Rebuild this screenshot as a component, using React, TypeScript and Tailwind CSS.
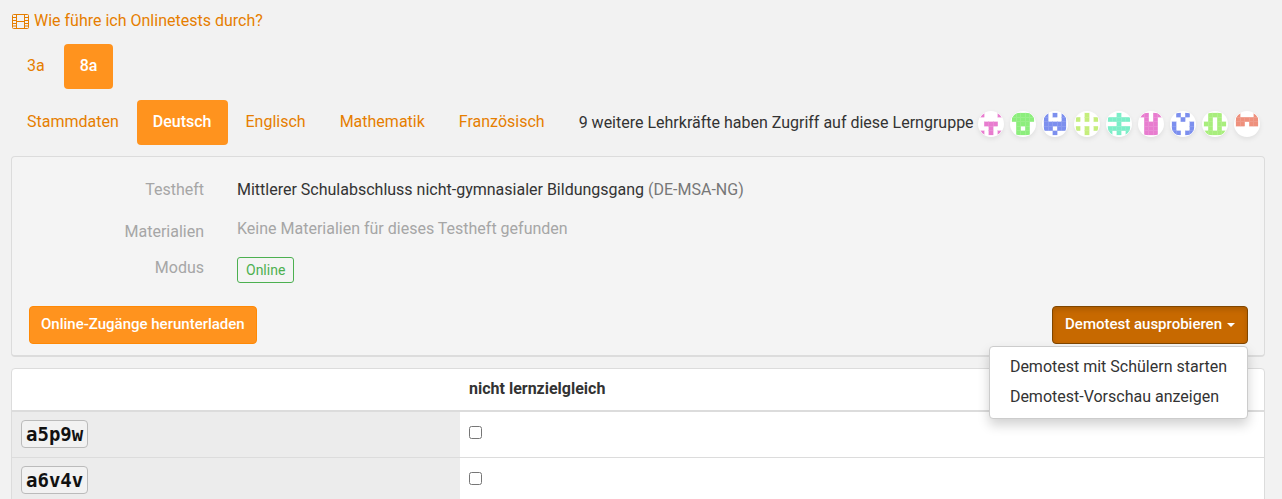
import { useState } from 'react'

type AvatarType = {
  id: number
  color: string
  rows: string[]
}

const avatars: AvatarType[] = [
  { id: 1, color: '#e87ccf', rows: ['10001', '00000', '01110', '00100', '10101'] },
  { id: 2, color: '#8cee7c', rows: ['11111', '11111', '01110', '01010', '01110'] },
  { id: 3, color: '#7c8fee', rows: ['10101', '10001', '11111', '11011', '00100'] },
  { id: 4, color: '#c5ee7c', rows: ['00100', '10101', '00000', '10101', '00100'] },
  { id: 5, color: '#7ceec8', rows: ['00100', '11111', '00100', '11111', '10101'] },
  { id: 6, color: '#e87ccf', rows: ['11011', '01010', '01110', '01110', '01110'] },
  { id: 7, color: '#7c8fee', rows: ['01010', '00100', '10001', '10001', '11011'] },
  { id: 8, color: '#a8ee7c', rows: ['01110', '01010', '11011', '01010', '11111'] },
  { id: 9, color: '#ee907c', rows: ['10001', '11111', '11011', '00000', '00000'] },
]

const classes = ['3a', '8a']
const subjects = ['Stammdaten', 'Deutsch', 'Englisch', 'Mathematik', 'Französisch']
const students = ['a5p9w', 'a6v4v']

const Avatar = ({ avatar }: { avatar: AvatarType }) => (
  <svg
    viewBox="0 0 26 26"
    className="size-[26px] shrink-0 rounded-full bg-white shadow-[0_2px_5px_rgba(0,0,0,0.08)]"
    aria-hidden="true">
    <clipPath id={`avatar-${avatar.id}`}>
      <rect x="1.75" y="1.75" width="22.5" height="22.5" rx="8" />
    </clipPath>
    <g
      clipPath={`url(#avatar-${avatar.id})`}
      fill={avatar.color}
      stroke={avatar.color}
      strokeOpacity="0.5"
      strokeWidth="0.3">
      {avatar.rows.map((row, y) =>
        row
          .split('')
          .map((cell, x) =>
            cell === '1' ? (
              <rect key={`${x}-${y}`} x={1.75 + x * 4.5} y={1.75 + y * 4.5} width="4.5" height="4.5" />
            ) : null,
          ),
      )}
    </g>
  </svg>
)

const FilmIcon = () => (
  <svg viewBox="0 0 17 15" className="h-[15px] w-[17px]" fill="none" stroke="currentColor" aria-hidden="true">
    <rect x="0.5" y="0.5" width="16" height="14" rx="1" />
    <path d="M4.5 1v13M12.5 1v13M4.5 7.5h8M1 3.5h3M1 6.5h3M1 9.5h3M1 12h3M13 3.5h3M13 6.5h3M13 9.5h3M13 12h3" />
  </svg>
)

const App: React.FC = () => {
  const [activeClass, setActiveClass] = useState('8a')
  const [activeSubject, setActiveSubject] = useState('Deutsch')
  const [menuOpen, setMenuOpen] = useState(true)

  return (
    <div className="min-h-screen overflow-hidden bg-[#f2f2f2] pl-[11px] pr-[17px] pt-[9px] font-['Roboto',sans-serif] text-[16px] leading-6 text-[#333]">
      <a href="#hilfe" className="flex w-fit items-center gap-[5px] pl-px text-[#e67e00]">
        <FilmIcon />
        Wie führe ich Onlinetests durch?
      </a>

      {/* Klassen */}
      <nav className="mt-[11px] flex gap-[3px]">
        {classes.map((name) => (
          <button
            key={name}
            type="button"
            onClick={() => setActiveClass(name)}
            className={`h-[45px] rounded px-4 pb-px ${name === activeClass ? 'bg-[#ff931e] font-medium text-white' : 'text-[#e67e00]'}`}>
            {name}
          </button>
        ))}
      </nav>

      {/* Fächer */}
      <div className="mt-[11px] flex items-center">
        <nav className="flex gap-[2px]">
          {subjects.map((name) => (
            <button
              key={name}
              type="button"
              onClick={() => setActiveSubject(name)}
              className={`h-[45px] rounded px-4 pb-px ${name === activeSubject ? 'bg-[#ff931e] font-medium text-white' : 'text-[#e67e00]'}`}>
              {name}
            </button>
          ))}
        </nav>
        <p className="ml-[18px] whitespace-nowrap">9 weitere Lehrkräfte haben Zugriff auf diese Lerngruppe</p>
        <div className="ml-1 flex items-center gap-[6px] pt-[2px]">
          {avatars.map((avatar) => (
            <Avatar key={avatar.id} avatar={avatar} />
          ))}
        </div>
      </div>

      <section className="mt-[11px] rounded border border-b-2 border-[#dcdcdc] bg-[#f4f4f4] pb-[11px] pl-[17px] pr-4 pt-[21px]">
        <dl className="grid grid-cols-[175px_1fr] gap-x-[33px]">
          <dt className="h-[42px] text-right text-[#a6a6a6]">Testheft</dt>
          <dd>
            Mittlerer Schulabschluss nicht-gymnasialer Bildungsgang <span className="text-[#777]">(DE-MSA-NG)</span>
          </dd>
          <dt className="h-9 text-right text-[#a6a6a6]">Materialien</dt>
          <dd className="-mt-[3px] text-[#a6a6a6]">Keine Materialien für dieses Testheft gefunden</dd>
          <dt className="h-[50px] text-right text-[#a6a6a6]">Modus</dt>
          <dd className="pt-px">
            <span className="inline-flex h-[26px] items-center rounded-[3px] border border-[#4cb050] px-2 text-[14px] text-[#4cb050]">
              Online
            </span>
          </dd>
        </dl>

        <div className="flex items-center justify-between">
          <button
            type="button"
            className="h-[38px] rounded border border-[#ff8905] bg-[#ff931e] px-[11px] pb-[2px] text-[15px] font-medium text-white">
            Online-Zugänge herunterladen
          </button>
          <div className="relative">
            <button
              type="button"
              aria-expanded={menuOpen}
              onClick={() => setMenuOpen(!menuOpen)}
              className="flex h-[38px] items-center gap-[5px] rounded border border-[#804600] bg-[#c76900] px-3 pb-[2px] text-[15px] font-medium text-white shadow-[inset_0_3px_5px_rgba(0,0,0,0.125)]">
              Demotest ausprobieren
              <span className="mt-[2px] border-x-4 border-t-4 border-x-transparent border-t-white" />
            </button>
            {menuOpen && (
              <ul className="absolute right-0 top-10 z-10 whitespace-nowrap rounded border border-[#ccc] bg-white pb-[6px] pt-[5px] shadow-[0_6px_12px_rgba(0,0,0,0.18)]">
                <li>
                  <a href="#start" className="block px-5 py-[3px]">
                    Demotest mit Schülern starten
                  </a>
                </li>
                <li>
                  <a href="#vorschau" className="block px-5 py-[3px]">
                    Demotest-Vorschau anzeigen
                  </a>
                </li>
              </ul>
            )}
          </div>
        </div>
      </section>

      {/* Schülerliste */}
      <div className="mt-[11px] overflow-hidden rounded-t border border-[#dcdcdc] bg-white">
        <table className="w-full table-fixed border-collapse text-left">
          <thead>
            <tr className="h-[42px] border-b-2 border-[#dcdcdc]">
              <td className="w-[448px]" />
              <th className="px-[9px] pb-[2px] font-bold">nicht lernzielgleich</th>
            </tr>
          </thead>
          <tbody>
            {students.map((code) => (
              <tr key={code} className="h-[46px] border-b border-[#dcdcdc] align-top">
                <td className="bg-[#ececec] px-[9px] pt-2">
                  <label
                    htmlFor={code}
                    className="flex h-7 w-fit items-center rounded border border-[#bbb] bg-[#f2f2f2] px-1 font-['DejaVu_Sans_Mono',monospace] text-[19px] font-bold text-[#111]">
                    {code}
                  </label>
                </td>
                <td className="px-[9px] pt-[14px]">
                  <input id={code} type="checkbox" className="block size-[13px]" />
                </td>
              </tr>
            ))}
          </tbody>
        </table>
      </div>
    </div>
  )
}

export default App
